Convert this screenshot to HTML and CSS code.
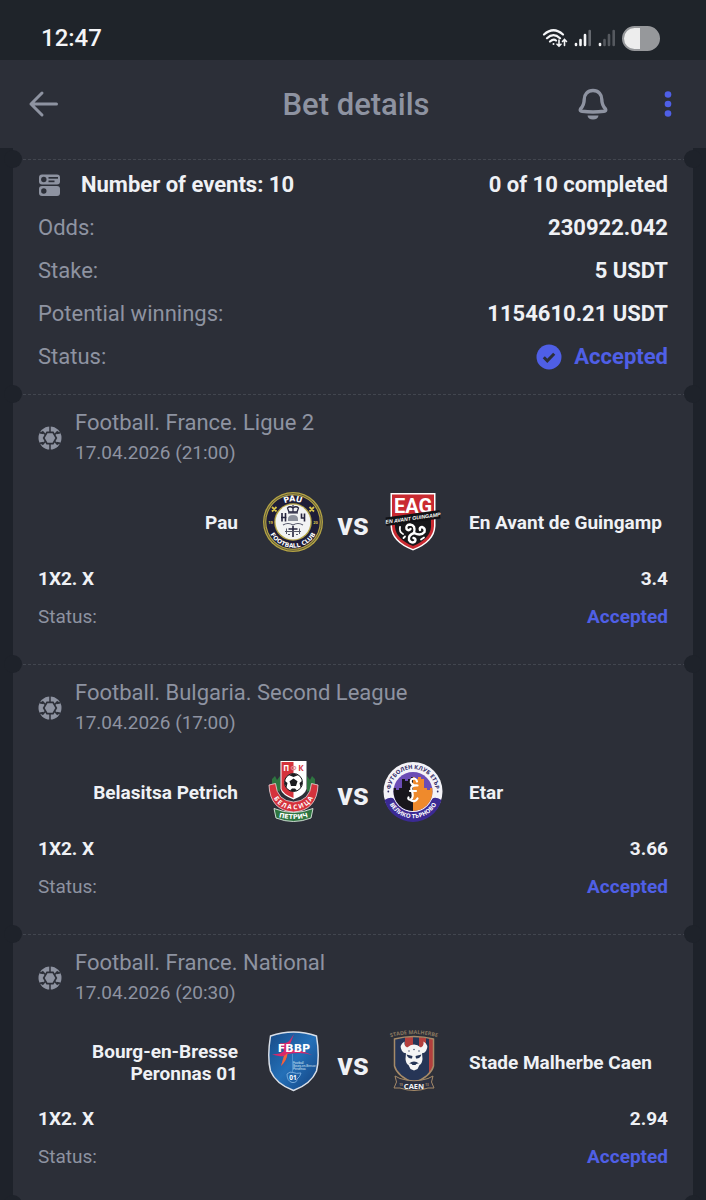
FILE: index.html
```html
<!DOCTYPE html>
<html lang="en">
<head>
  <meta charset="UTF-8" />
  <meta name="viewport" content="width=device-width, initial-scale=1.0" />
  <title>Bet details</title>
  <link rel="stylesheet" href="styles.css">
</head>
<body>
  <svg class="defs" aria-hidden="true">
    <symbol id="ball" viewBox="0 0 24 24">
      <circle cx="12" cy="12" r="11.5" fill="#8e93a1"/>
      <path d="M12 0V6M12 18V24M7.300 8.500 4.300 5.200M16.700 8.500 19.700 5.200M7.300 15.500 4.300 18.800M16.700 15.500 19.700 18.800" stroke="#2c2f38" stroke-width="1.500"/>
      <path d="M9 6.300H15L18.300 12 15 17.700H9L5.700 12Z" fill="#8e93a1" stroke="#2c2f38" stroke-width="1.700"/>
      <path d="M2.500 5.500 6 6.200 5.500 8.300 1.500 7.500ZM21.500 5.500 18 6.200 18.500 8.300 22.500 7.500ZM2.500 18.500 6 17.800 5.500 15.700 1.500 16.500ZM21.500 18.500 18 17.800 18.500 15.700 22.500 16.500Z" fill="#2c2f38"/>
    </symbol>
  </svg>

  <div class="screen">
    <div class="statusbar">
      <time>12:47</time>
      <div class="statusbar-icons">
        <svg width="26" height="20" viewBox="0 0 26 20" fill="none" stroke="#f4f5f7" stroke-width="2.2" stroke-linecap="round">
          <path d="M2 6.5Q11.500-2 21 6.500M5 10.200Q11.500 4 18 10.200M8 13.500Q11.500 10.500 14 12.500"/>
          <circle cx="11.500" cy="16" r="1" fill="#f4f5f7" stroke="none"/>
          <path d="M17 12V18M15 16.200 17 18.200 19 16.200M22.500 17.500V12M20.500 13.500 22.500 11.500 24.500 13.500" stroke-width="1.600"/>
        </svg>
        <svg width="18" height="18" viewBox="0 0 18 18" fill="none" stroke-width="2.600" stroke-linecap="round">
          <path d="M2 15V16M6.500 11V16M11 6V16" stroke="#f4f5f7"/>
          <path d="M15.700 2V16" stroke="#666a70"/>
        </svg>
        <svg width="18" height="18" viewBox="0 0 18 18" fill="none" stroke-width="2.600" stroke-linecap="round">
          <path d="M2 15V16" stroke="#f4f5f7"/>
          <path d="M6.500 11V16M11 6V16M15.700 2V16" stroke="#55595f"/>
        </svg>
        <span class="battery"></span>
      </div>
    </div>

    <header class="topbar">
      <button class="icon-btn" type="button" aria-label="Back">
        <svg width="32" height="32" viewBox="0 0 32 32" fill="none" stroke="#8e93a1" stroke-width="3" stroke-linecap="round" stroke-linejoin="round">
          <path d="M28.500 16H3M14 5 3 16 14 27"/>
        </svg>
      </button>
      <h1>Bet details</h1>
      <div class="topbar-actions">
        <button class="icon-btn" type="button" aria-label="Notifications">
          <svg width="32" height="32" viewBox="0 0 32 32" fill="none" stroke="#8e93a1" stroke-width="3.400" stroke-linecap="round" stroke-linejoin="round">
            <path d="M16 2.500C10.500 2.500 7.200 6.500 7.200 11.500C7.200 16.500 5.800 18.500 3.500 21Q2.500 23 5 23.300Q16 24.800 27 23.300Q29.500 23 28.500 21C26.200 18.500 24.800 16.500 24.800 11.500C24.800 6.500 21.500 2.500 16 2.500Z"/>
            <path d="M10.500 27.500H21.500Q21 31.600 16 31.600T10.500 27.500Z" fill="#8e93a1" stroke="none"/>
          </svg>
        </button>
        <button class="icon-btn" type="button" aria-label="More">
          <svg width="32" height="32" viewBox="0 0 32 32" fill="#4f5fe6">
            <circle cx="16" cy="6.500" r="3.300"/><circle cx="16" cy="16" r="3.300"/><circle cx="16" cy="25.500" r="3.300"/>
          </svg>
        </button>
      </div>
    </header>

    <main class="ticket">
      <section class="summary">
        <div class="row row-main">
          <span class="row-label">
            <svg width="24" height="24" viewBox="0 0 24 24" fill="#8e93a1">
              <rect x="1" y="1.500" width="21" height="10" rx="3"/>
              <rect x="1" y="13" width="21" height="10" rx="3"/>
              <g fill="#2c2f38">
                <circle cx="5.800" cy="6.500" r="2.700"/>
                <circle cx="5.800" cy="18" r="2.700"/>
                <rect x="10.500" y="4" width="9.500" height="1.700"/>
                <rect x="10.500" y="7.500" width="6" height="1.700"/>
              </g>
            </svg>
            Number of events: 10
          </span>
          <span class="value">0 of 10 completed</span>
        </div>
        <div class="row"><span>Odds:</span><span class="value">230922.042</span></div>
        <div class="row"><span>Stake:</span><span class="value">5 USDT</span></div>
        <div class="row"><span>Potential winnings:</span><span class="value">1154610.21 USDT</span></div>
        <div class="row">
          <span>Status:</span>
          <span class="value accepted">
            <svg width="26" height="26" viewBox="0 0 26 26" fill="none">
              <circle cx="13" cy="13" r="12.500" fill="#4f5fe6"/>
              <path d="M7.800 13.300 11.300 16.800 18.200 9.800" stroke="#2c2f38" stroke-width="3"/>
            </svg>
            Accepted
          </span>
        </div>
      </section>

      <section class="event">
        <div class="event-head">
          <svg width="24" height="24"><use href="#ball"/></svg>
          <div>
            <h2>Football. France. Ligue 2</h2>
            <time>17.04.2026 (21:00)</time>
          </div>
        </div>
        <div class="match">
          <span class="team home">Pau</span>
          <svg class="crest" viewBox="0 0 60 60" role="img" aria-label="Pau FC">
            <path id="pau-top" d="M9.500 30A20.500 20.500 0 0 1 50.500 30" fill="none"/>
            <path id="pau-bottom" d="M4.300 30A25.700 25.700 0 0 0 55.700 30" fill="none"/>
            <circle cx="30" cy="30" r="30" fill="#b5a444"/>
            <circle cx="30" cy="30" r="28.300" fill="none" stroke="#4a4735" stroke-width="0.800"/>
            <circle cx="30" cy="30" r="26.700" fill="#1e1d38"/>
            <circle cx="30" cy="30" r="18.800" fill="#b5a444"/>
            <circle cx="30" cy="30" r="17.500" fill="#f2f3f4"/>
            <text class="logo-text wide" font-size="8" fill="#fff"><textPath href="#pau-top" startOffset="50%">PAU</textPath></text>
            <text class="logo-text wide" font-size="6" fill="#fff"><textPath href="#pau-bottom" startOffset="50%">FOOTBALL CLUB</textPath></text>
            <path d="M9 15 13.500 19.500M13.500 15 9 19.500M46.500 15 51 19.500M51 15 46.500 19.500" stroke="#d8c34a" stroke-width="1.800"/>
            <text class="logo-text" x="7.500" y="31.500" font-size="4" fill="#d8c34a">19</text>
            <text class="logo-text" x="52.500" y="31.500" font-size="4" fill="#d8c34a">20</text>
            <path d="M26 20 24.500 16Q27 13.500 30 16Q33 13.500 35.500 16L34 20Z" fill="none" stroke="#25243e" stroke-width="1.300"/>
            <path d="M30 13V20M25 21H35" stroke="#25243e" stroke-width="1.200"/>
            <path d="M25 29V27Q25 23 30 23T35 27V29Z" fill="#8c909c"/>
            <path d="M19 21V29.500M22.500 21V29.500M18 25.500H23.500M38.500 21.500V26H42M41.500 21.500V29.500" fill="none" stroke="#25243e" stroke-width="1.600"/>
            <path d="M20 33Q25 30 30 33Q35 30 40 33" fill="none" stroke="#55576a" stroke-width="1.200"/>
            <path d="M30 34V45M25.500 37H34.500" fill="none" stroke="#25243e" stroke-width="1.600"/>
            <path d="M23.500 36.500V42M36.500 36.500V42M22 39.500H38M25 42.500 27 42.500M33 42.500H35" fill="none" stroke="#555768" stroke-width="1"/>
          </svg>
          <span class="vs">vs</span>
          <svg class="crest" viewBox="0 0 60 60" role="img" aria-label="En Avant de Guingamp">
            <path d="M7.500 1H52.500V34Q52 50 30 58.500Q8 50 7.500 34Z" fill="#fff"/>
            <path d="M9 2.500H51V34Q50.500 49 30 57Q9.500 49 9 34Z" fill="#c92a31"/>
            <path d="M12 27H48V35Q47 47 30 54Q13 47 12 35Z" fill="#17171a"/>
            <text class="logo-text heavy" x="30" y="20.500" font-size="20" fill="#fff">EAG</text>
            <g fill="none" stroke="#fff" stroke-width="2.400" stroke-linecap="round">
              <path d="M31 41Q33 33 27 32.500Q22.500 33 23.500 37Q25.500 39.500 27.500 37"/>
              <path d="M31 41Q38 44.500 41.500 40Q42.500 36 39 35Q36 35.500 37 38"/>
              <path d="M31 41Q25 43 26 48Q28.500 52 32 49.500Q33.500 46.500 30.500 46"/>
              <path d="M17 35Q16 40 20 42M20.500 46 22 44.500M38 47.500 41 45.500" stroke-width="1.800"/>
            </g>
            <path d="M2.500 25.500 56.500 18 57.500 26.500 3.500 34Z" fill="#111216"/>
            <text class="logo-text slanted" x="30" y="28" font-size="5.200" fill="#fff" transform="rotate(-8 30 26)">EN AVANT GUINGAMP</text>
          </svg>
          <span class="team">En Avant de Guingamp</span>
        </div>
        <div class="event-row"><span class="pick">1X2. X</span><span class="pick">3.4</span></div>
        <div class="event-row"><span>Status:</span><span class="accepted">Accepted</span></div>
      </section>

      <section class="event">
        <div class="event-head">
          <svg width="24" height="24"><use href="#ball"/></svg>
          <div>
            <h2>Football. Bulgaria. Second League</h2>
            <time>17.04.2026 (17:00)</time>
          </div>
        </div>
        <div class="match">
          <span class="team home">Belasitsa Petrich</span>
          <svg class="crest" viewBox="0 0 60 60" role="img" aria-label="Belasitsa Petrich">
            <path id="bel-arc" d="M7.500 22Q9 46.500 30.500 47.500Q52 46.500 53.500 22" fill="none"/>
            <path id="bel-base" d="M12 54Q30.500 60 49 54" fill="none"/>
            <path d="M9 26V17L12 14 14 18 17 14V30ZM52 26V17L49 14 47 18 44 14V30Z" fill="#2e7540"/>
            <path d="M17.500-1H43.500V27Q42 33 30.500 37.500Q19 33 17.500 27Z" fill="#fff"/>
            <path d="M18.500 0H30.500V36Q20 32 18.500 27Z" fill="#d5323c"/>
            <text class="logo-text" x="23.300" y="8.500" font-size="8" fill="#fff">П</text>
            <text class="logo-text" x="30.500" y="8.500" font-size="7" fill="#e08a8f">Ф</text>
            <text class="logo-text" x="38" y="8.500" font-size="8" fill="#d5323c">К</text>
            <circle cx="30.500" cy="20.500" r="9" fill="#fff" stroke="#1b1c20" stroke-width="1"/>
            <path d="M30.500 16.500 34.500 19.300 33 24H28L26.500 19.300ZM25.500 13 30.500 11.500 35.500 13 30.500 15ZM22 19 24.500 21 23.500 25.500 21.800 22ZM39 19 36.500 21 37.500 25.500 39.200 22ZM27 28.500 29 26.500H32L34 28.500 30.500 29.500Z" fill="#1b1c20"/>
            <path d="M6 23 12.500 21.500Q14 39 30.500 40Q47 39 48.500 21.500L55 23Q54 48.500 30.500 50Q7 48.500 6 23Z" fill="#d5323c" stroke="#f0d8da" stroke-width="0.800"/>
            <text class="logo-text" font-size="6.500" fill="#fff"><textPath href="#bel-arc" startOffset="50%">Б Е Л А С И Ц А</textPath></text>
            <path d="M11 46.500Q30.500 54.500 50 46.500L48 56Q30.500 63 13 56Z" fill="#2e7540" stroke="#dfeae1" stroke-width="0.900"/>
            <text class="logo-text wide" font-size="6.500" fill="#fff"><textPath href="#bel-base" startOffset="50%">ПЕТРИЧ</textPath></text>
          </svg>
          <span class="vs">vs</span>
          <svg class="crest" viewBox="0 0 60 60" role="img" aria-label="Etar">
            <clipPath id="etar-disc"><circle cx="30" cy="29.500" r="19.500"/></clipPath>
            <path id="etar-top" d="M7.500 29.500A22.500 22.500 0 0 1 52.500 29.500" fill="none"/>
            <path id="etar-bottom" d="M3.300 29.500A26.700 26.700 0 0 0 56.700 29.500" fill="none"/>
            <circle cx="30" cy="29.500" r="29.500" fill="#f4f3f8"/>
            <path d="M1.500 38Q8 34 11 37Q30 55 49 37Q52 34 58.500 38A29.500 29.500 0 0 1 1.500 38Z" fill="#3b2a94"/>
            <circle cx="30" cy="29.500" r="20.500" fill="#f4f3f8"/>
            <g clip-path="url(#etar-disc)">
              <rect x="10" y="9" width="40" height="41" fill="#6b4db5"/>
              <path d="M10 26H13V28H16V26H19V17H22V19H25V17H28V15H30V50H10Z" fill="#18161c"/>
              <path d="M30 15H32V17H35V15H38V17H41V26H44V28H47V26H50V50H30Z" fill="#ef8a2c"/>
            </g>
            <path d="M34 19.500Q33 15.500 29 17Q25.500 20 31 23.500M34.500 23.500Q27 23 28.500 28Q31.500 35 27.500 38Q24.500 37.500 25.500 35.500M27.500 38Q32 41 34.500 36.500M27 29H33" fill="none" stroke="#fff" stroke-width="2.200" stroke-linecap="round"/>
            <text class="logo-text" font-size="5.800" fill="#2f2a66"><textPath href="#etar-top" startOffset="50%">ФУТБОЛЕН КЛУБ ЕТЪР</textPath></text>
            <text class="logo-text" font-size="6" fill="#fff"><textPath href="#etar-bottom" startOffset="50%">ВЕЛИКО ТЪРНОВО</textPath></text>
            <circle cx="5.300" cy="29.500" r="0.900" fill="#2f2a66"/><circle cx="54.700" cy="29.500" r="0.900" fill="#2f2a66"/>
          </svg>
          <span class="team">Etar</span>
        </div>
        <div class="event-row"><span class="pick">1X2. X</span><span class="pick">3.66</span></div>
        <div class="event-row"><span>Status:</span><span class="accepted">Accepted</span></div>
      </section>

      <section class="event">
        <div class="event-head">
          <svg width="24" height="24"><use href="#ball"/></svg>
          <div>
            <h2>Football. France. National</h2>
            <time>17.04.2026 (20:30)</time>
          </div>
        </div>
        <div class="match">
          <span class="team home">Bourg-en-Bresse Peronnas 01</span>
          <svg class="crest" viewBox="0 0 60 60" role="img" aria-label="Bourg-en-Bresse Peronnas 01">
            <linearGradient id="fbbp-blue" x1="0" y1="0" x2="1" y2="1">
              <stop offset="0" stop-color="#174a86"/><stop offset="0.500" stop-color="#2470b8"/><stop offset="1" stop-color="#123f7c"/>
            </linearGradient>
            <path d="M30.500 0Q42 0 53.500 4Q57 25 53.500 39Q48 52 30.500 58.500Q13 52 7.500 39Q4 25 7.500 4Q19 0 30.500 0Z" fill="url(#fbbp-blue)" stroke="#d9dfe8" stroke-width="1.500"/>
            <path d="M31 2 27 8Q24 12 17 11L21 19Q18 22 9 22.500Q18 25 21 24L18 34Q24 28 24.500 22Q38 19.500 49 23Q36 17 25 18Q27 12 31 2Z" fill="#d8286c"/>
            <path d="M21 24 18 34Q24 28 24.500 21Z" fill="#ec6a3c"/>
            <text class="logo-text wide" x="31" y="19.500" font-size="11" fill="#fff">FBBP</text>
            <g class="logo-small" font-size="3" fill="#dce8f6">
              <text x="30" y="32">Football</text>
              <text x="30" y="35">Bourg-en-Bresse</text>
              <text x="30" y="38">Peronnas</text>
            </g>
            <path d="M29.500 22V40" stroke="#7fb0e0" stroke-width="0.500"/>
            <path d="M24 42Q27 39 30 40.500Q33 42 38 41Q37 45 34 47Q34 51 29 50.500Q24 49 24 42Z" fill="none" stroke="#7fb0e0" stroke-width="0.900"/>
            <text class="logo-text" x="30" y="48" font-size="6.500" fill="#fff">01</text>
          </svg>
          <span class="vs">vs</span>
          <svg class="crest" viewBox="0 0 60 60" role="img" aria-label="Stade Malherbe Caen">
            <clipPath id="caen-shield"><path d="M11.500 7Q31 2 50.500 7V34Q48 44 31 51Q14 44 11.500 34Z"/></clipPath>
            <path id="caen-arc" d="M7 5.500Q31-1.500 55 5.500" fill="none"/>
            <g clip-path="url(#caen-shield)">
              <rect x="10" y="2" width="42" height="50" fill="#263556"/>
              <path d="M22 2H30V16H22ZM36 2H43V16H36ZM46 2H52V40H46Z" fill="#b33f3d"/>
            </g>
            <path d="M11.500 7Q31 2 50.500 7V34Q48 44 31 51Q14 44 11.500 34Z" fill="none" stroke="#a58a68" stroke-width="1.500"/>
            <text class="logo-text" font-size="5.400" fill="#8a7860"><textPath href="#caen-arc" startOffset="50%">STADE MALHERBE</textPath></text>
            <path d="M21.500 9.500Q15.500 13 19 19Q21 22 25 21L27 15.500Q20.500 16 21.500 9.500ZM40.500 9.500Q46.500 13 43 19Q41 22 37 21L35 15.500Q41.500 16 40.500 9.500Z" fill="#f5f5f5"/>
            <path d="M23 21Q23 13 31 12.500Q39 13 39 21L39.500 27Q39 32 36.500 33L34.500 37 31 38.500 27.500 37 25.500 33Q23 32 22.500 27Z" fill="#f5f5f5"/>
            <path d="M23.500 22.500 29.500 24 29 26.500Q25 27 23.500 22.500ZM38.500 22.500 32.500 24 33 26.500Q37 27 38.500 22.500ZM26 31.500Q31 27.500 36 31.500Q33 31 32.500 33H29.500Q29 31 26 31.500Z" fill="#263556"/>
            <circle cx="26" cy="19" r="0.700" fill="#263556"/><circle cx="31" cy="17.500" r="0.700" fill="#263556"/><circle cx="36" cy="19" r="0.700" fill="#263556"/>
            <path d="M12 44 17 46.500Q31 51 45 46.500L50 44 48.500 50 51 56 45 56Q31 61 17 56L11 56 13.500 50Z" fill="#2c3040" stroke="#a58a68" stroke-width="1"/>
            <text class="logo-text" x="31" y="56.500" font-size="7.500" fill="#f5f5f5">CAEN</text>
            <text class="logo-text" x="18" y="54" font-size="3" fill="#a58a68">19</text>
            <text class="logo-text" x="44" y="54" font-size="3" fill="#a58a68">13</text>
          </svg>
          <span class="team">Stade Malherbe Caen</span>
        </div>
        <div class="event-row"><span class="pick">1X2. X</span><span class="pick">2.94</span></div>
        <div class="event-row"><span>Status:</span><span class="accepted">Accepted</span></div>
      </section>

      <section class="event"></section>
    </main>
  </div>
</body>
</html>
```
FILE: styles.css
```css
* {
  box-sizing: border-box;
}
body {
  margin: 0;
  background: #1e222a;
  color: #8e93a1;
  font-family: Roboto, sans-serif;
  font-size: 22px;
}
svg {
  display: block;
  flex-shrink: 0;
}
.defs {
  position: absolute;
  width: 0;
  height: 0;
}
.screen {
  display: flex;
  flex-direction: column;
  height: 100vh;
  overflow: hidden;
}

/* phone status bar */
.statusbar {
  display: flex;
  flex-shrink: 0;
  align-items: center;
  justify-content: space-between;
  height: 60px;
  padding: 16px 46px 0 41px;
  background: #1f242a;
  color: #f4f5f7;
  font-size: 24px;
  font-weight: 500;
}
.statusbar-icons {
  display: flex;
  align-items: center;
  gap: 6px;
}
.battery {
  width: 38px;
  height: 25px;
  border: 2px solid #96989b;
  border-radius: 13px;
  background: linear-gradient(to right, #ededed 48%, #96989b 48%);
}

/* header */
.topbar {
  display: grid;
  flex-shrink: 0;
  grid-template-columns: 1fr auto 1fr;
  align-items: center;
  height: 88px;
  padding: 0 22px 0 28px;
  background: #2c2f38;
}
.topbar h1 {
  margin: 0;
  font-size: 31px;
  font-weight: 500;
}
.topbar-actions {
  display: flex;
  justify-content: flex-end;
  gap: 43px;
}
.icon-btn {
  width: 32px;
  height: 32px;
  padding: 0;
  border: 0;
  background: none;
  cursor: pointer;
}

/* ticket */
.ticket {
  flex: 1;
  min-height: 0;
  margin: 0 13px;
  padding-top: 11px;
  background: #2c2f38;
}
/* perforation: dashed line and two notches */
.summary,
.event {
  position: relative;
  padding: 14px 25px 28px;
  background: repeating-linear-gradient(to right, #42464f 0 3px, transparent 3px 5px) 0 0 / 100% 1px no-repeat;
}
.summary {
  padding-top: 4px;
  padding-bottom: 16px;
}
.summary::before,
.summary::after,
.event::before,
.event::after {
  content: "";
  position: absolute;
  top: -9px;
  width: 18px;
  height: 18px;
  border-radius: 50%;
  background: #1e222a;
}
.summary::before,
.event::before {
  left: -9px;
}
.summary::after,
.event::after {
  right: -9px;
}
.row {
  display: flex;
  align-items: center;
  justify-content: space-between;
  height: 43px;
}
.row-label {
  display: flex;
  align-items: center;
  gap: 19px;
}
.row-main,
.value {
  color: #eff1f5;
  font-weight: 700;
}
.value {
  display: flex;
  align-items: center;
  gap: 12px;
}
.accepted {
  color: #4f5fe6;
  font-weight: 700;
}

/* events */
.event-head {
  display: flex;
  align-items: center;
  gap: 13px;
  margin-bottom: 24px;
}
.event-head h2 {
  margin: 0;
  font-size: 22px;
  font-weight: 400;
  line-height: 30px;
}
.event-head time {
  display: block;
  font-size: 19px;
  line-height: 30px;
}
.match {
  display: grid;
  grid-template-columns: 1fr 60px 60px 60px 1fr;
  align-items: center;
  margin-bottom: 8px;
}
.crest {
  width: 60px;
  height: 60px;
  overflow: visible;
}
.team {
  padding: 2px 0 0 26px;
  color: #eff1f5;
  font-size: 19px;
  font-weight: 700;
  line-height: 22px;
}
.home {
  padding: 2px 25px 0 0;
  text-align: right;
}
.vs {
  padding-top: 6px;
  color: #eff1f5;
  font-size: 31px;
  font-weight: 700;
  line-height: 36px;
  text-align: center;
}
.event-row {
  display: flex;
  justify-content: space-between;
  font-size: 19px;
  line-height: 38px;
}
.pick {
  color: #eff1f5;
  font-weight: 700;
}

/* lettering inside crests */
.logo-text {
  font-family: "Open Sans", sans-serif;
  font-weight: 700;
  text-anchor: middle;
}
.heavy {
  font-family: Roboto, sans-serif;
}
.slanted {
  font-family: "Liberation Sans", sans-serif;
  font-style: italic;
}
.wide {
  font-family: "DejaVu Sans", sans-serif;
}
.logo-small {
  font-family: "Liberation Sans", sans-serif;
}
```
